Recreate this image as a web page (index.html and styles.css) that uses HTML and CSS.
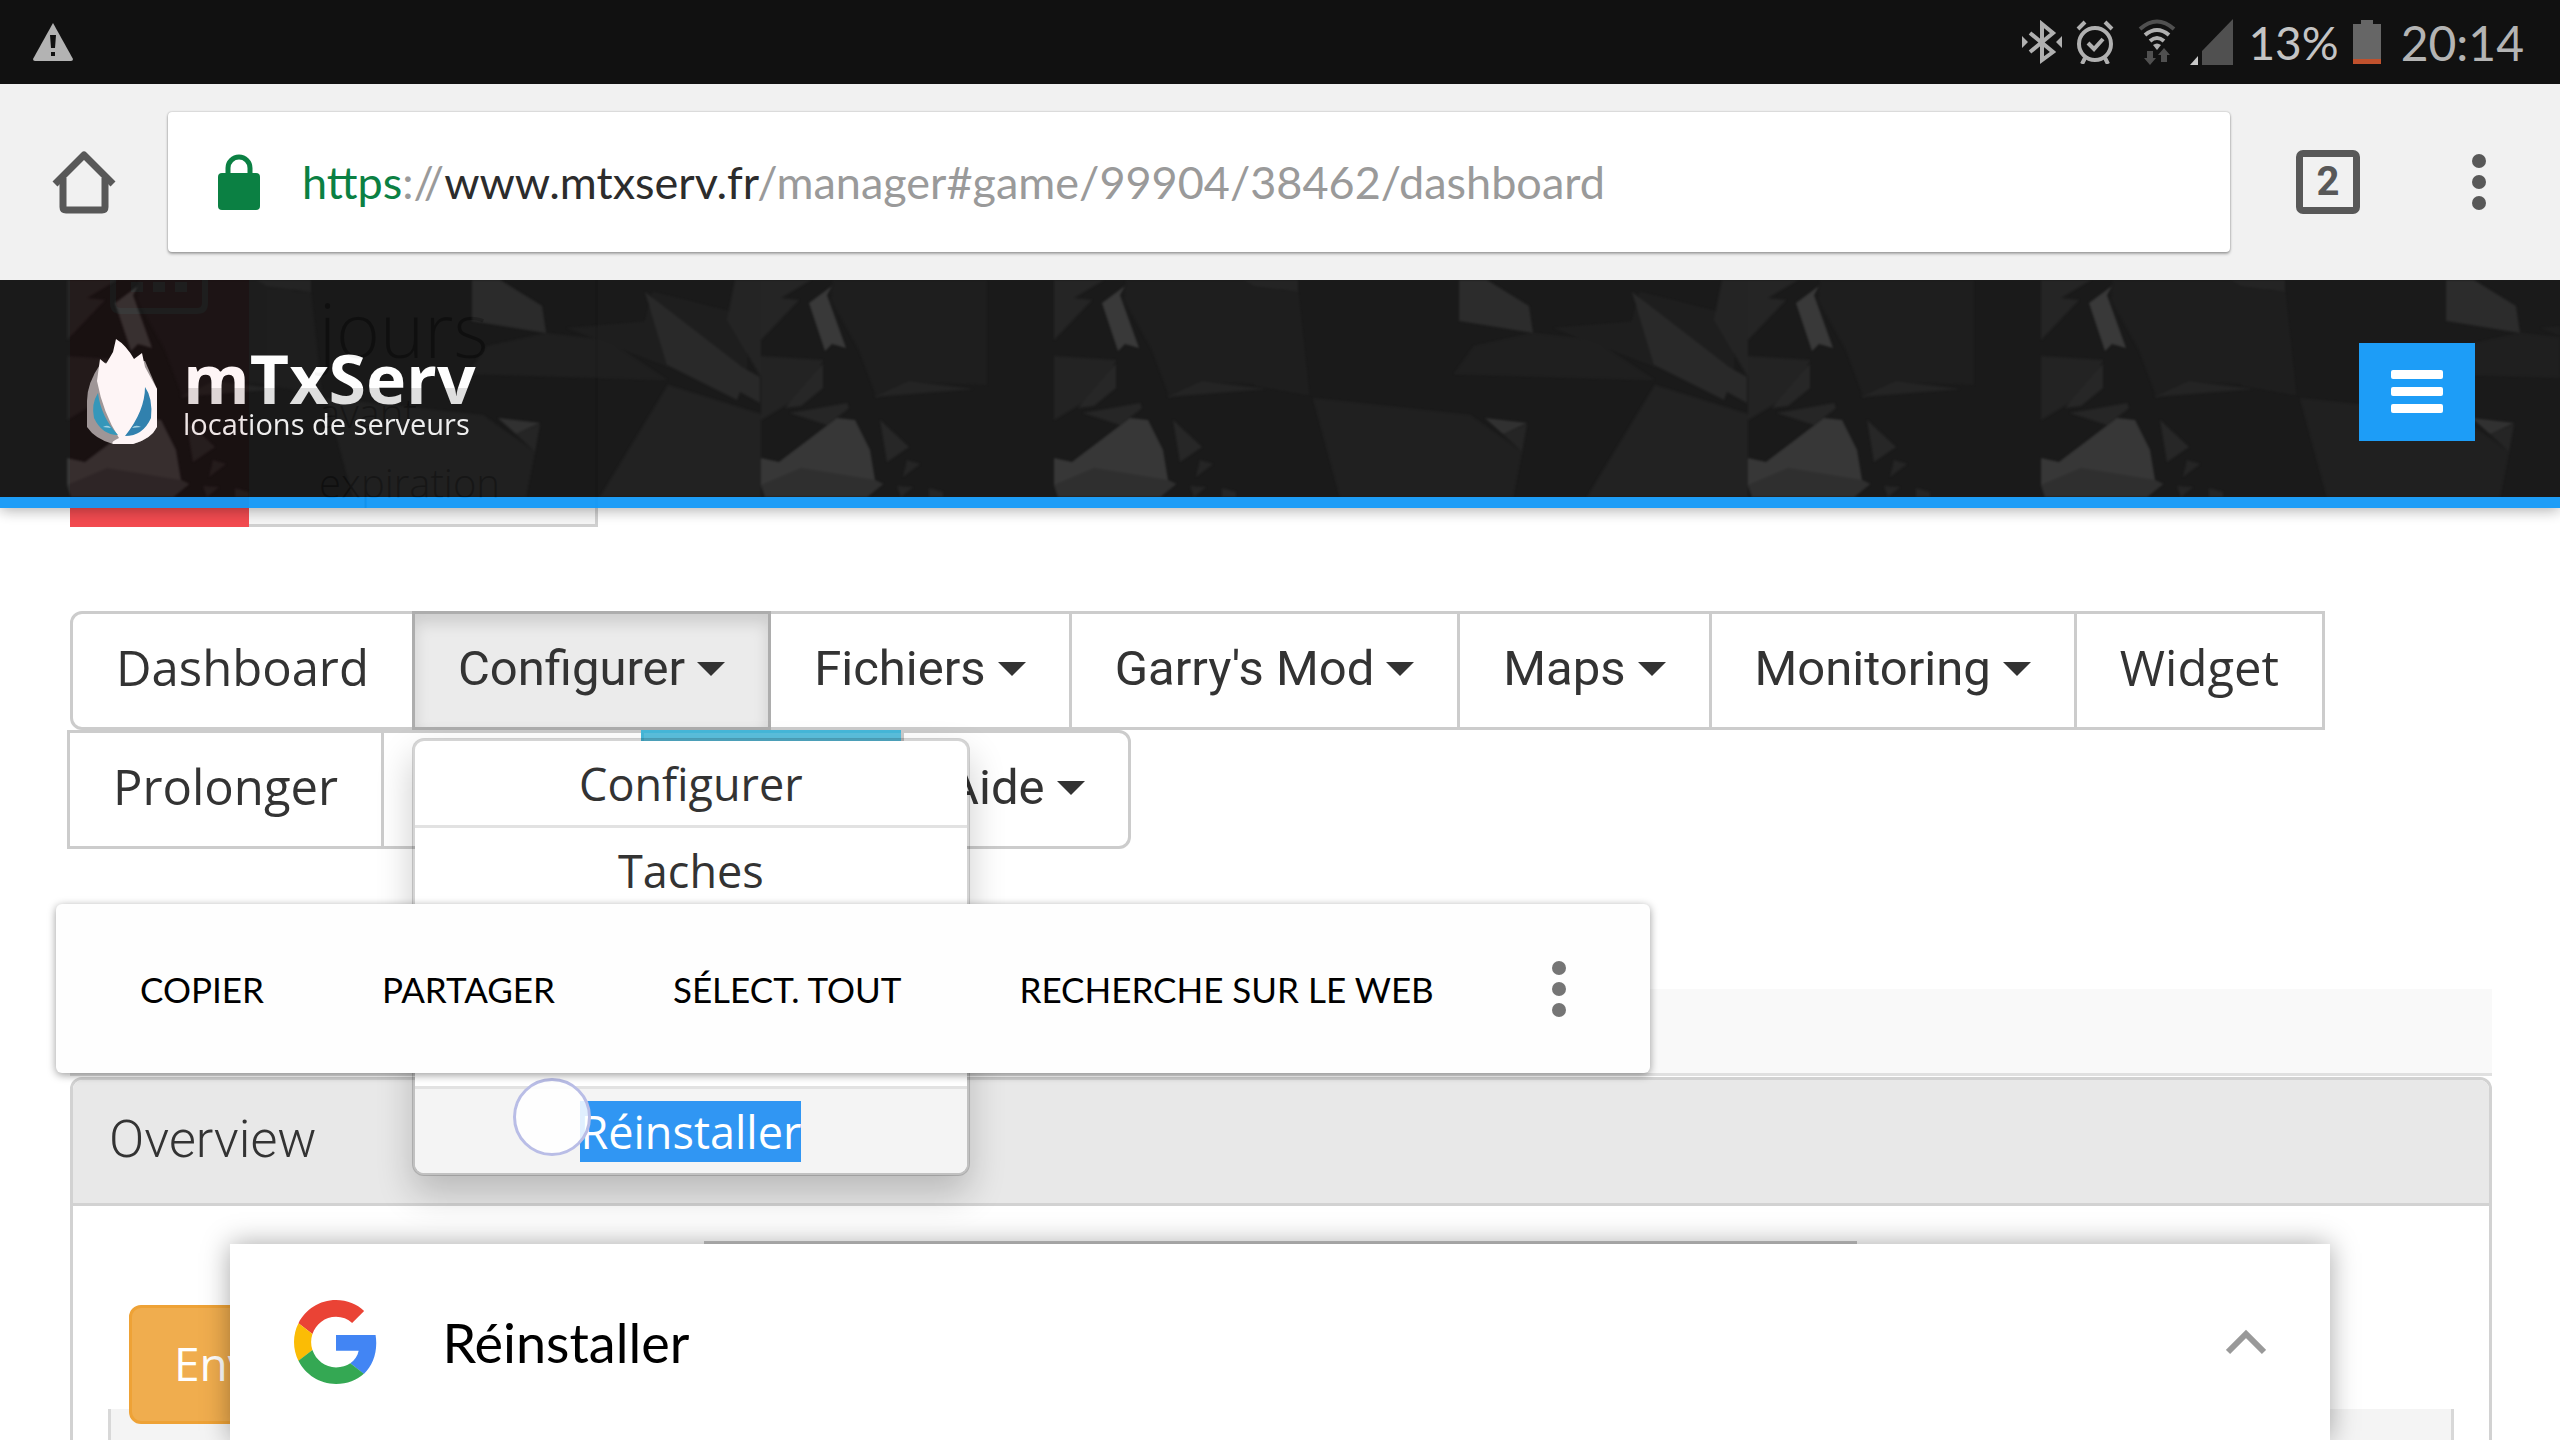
FILE: index.html
```html
<!DOCTYPE html>
<html lang="fr">
<head>
<meta charset="utf-8">
<title>mTxServ - Manager</title>
<link rel="stylesheet" href="styles.css">
</head>
<body>
<div class="statusbar">
  <svg class="warn" width="42" height="40" viewBox="0 0 42 40"><path d="M21 1 41 37q0 2-2 2H3q-2 0-2-2z" fill="#b3b3b3"/><path d="M18 13h6l-1 13h-4zM19 30h4v4h-4z" fill="#111"/></svg>
  <div class="status-right">
    <svg width="40" height="44" viewBox="0 0 40 44" fill="none" stroke="#b0b0b0" stroke-width="4"><path d="M8 13 31 32 20 40V4l11 9L8 32"/><path d="M0 16v12l6-6zM40 16v12l-6-6z" fill="#b0b0b0" stroke="none"/></svg>
    <svg width="38" height="44" viewBox="0 0 38 44" fill="none" stroke="#b0b0b0" stroke-width="4"><circle cx="19" cy="24" r="16"/><path d="m12 23 6 6 9-10M2 9l7-7M36 9l-7-7M9 38l-3 6M29 38l3 6"/></svg>
    <svg class="wifi" width="38" height="46" viewBox="0 0 38 46" fill="none" stroke-width="4"><path d="M2 10Q19-5 36 10" stroke="#505050"/><path d="M7 16q12-10 24 0M12 22q7-6 14 0" stroke="#b0b0b0"/><path d="m15 26q4-3 8 0l-4 5z" fill="#b0b0b0"/><path d="M9 32h6v7h3l-6 7-6-7h3zM23 43h6v-7h3l-6-7-6 7h3z" fill="#505050"/></svg>
    <svg class="signal" width="44" height="46" viewBox="0 0 44 46"><path d="M12 32 43 0v46H12z" fill="#505050"/><path d="M0 46h8v-9z" fill="#c8c8c8"/></svg>
    <span class="level">13%</span>
    <svg class="battery" width="28" height="44" viewBox="0 0 28 44"><path d="M8 0h12v4h8v35H0V4h8z" fill="#666"/><path d="M0 39h28v5H0z" fill="#c0512d"/></svg>
    <span>20:14</span>
  </div>
</div>

<div class="toolbar">
  <button class="icon-btn home" aria-label="Accueil"><svg width="64" height="64" viewBox="0 0 64 64" fill="none" stroke="#585858" stroke-width="7" stroke-linejoin="round"><path d="M3 34 32 5l29 29"/><path d="M11 28v29q0 3 3 3h36q3 0 3-3V28"/></svg></button>
  <div class="omnibox">
    <svg width="42" height="56" viewBox="0 0 42 56"><path d="M10 22V14a11 11 0 0 1 22 0v8" fill="none" stroke="#0b8043" stroke-width="5"/><rect y="19" width="42" height="37" rx="4" fill="#0b8043"/></svg>
    <div class="url" role="textbox" aria-label="Adresse" contenteditable="true" spellcheck="false"><span class="secure">https</span>://<span class="host">www.mtxserv.fr</span>/manager#game/99904/38462/dashboard</div>
  </div>
  <button class="icon-btn tabs" aria-label="Onglets">2</button>
  <button class="icon-btn" aria-label="Menu"><svg width="14" height="58" viewBox="0 0 14 58" fill="#585858"><circle cx="7" cy="8" r="7"/><circle cx="7" cy="29" r="7"/><circle cx="7" cy="50" r="7"/></svg></button>
</div>

<main class="viewport">
  <header class="site-header">
    <svg class="facets" width="100%" height="100%" aria-hidden="true">
      <defs>
        <g id="facet-main">
          <path d="M0 0H50L20 18 38 20 0 60z" fill="#1a1a1a"/>
          <path d="M0 76 62 80 50 110 0 140z" fill="#181818"/>
          <path d="M24 128 62 84V108L40 126z" fill="#1c1c1c"/>
          <path d="M72 0H226V105L148 102 116 118 98 70 70 20z" fill="#121212"/>
          <path d="M48 23 71 6 66 15 85 68 71 64 64 71z" fill="#2f2f2f"/>
          <path d="M29 133 86 123 88 128 82 133 66 145z" fill="#1b1b1b"/>
          <path d="M0 178 18 182 76 138 94 140 109 170 114 200 122 204 106 217H4L0 205z" fill="#2d2d2d"/>
          <path d="M0 205 40 188 114 200 122 204 106 217H4z" fill="#242424"/>
          <path d="M119 140 148 167 126 182z" fill="#1c1c1c"/>
          <path d="M146 180 159 184 142 197zM136 206 152 207 140 217zM168 208 182 212V217H168z" fill="#1a1a1a"/>
          <path d="M113 117 148 101 212 109z" fill="#191919"/>
        </g>
        <pattern id="facets" x="67" width="987" height="217" patternUnits="userSpaceOnUse">
          <g>
            <use href="#facet-main"/>
            <path d="M190 0H244V12L200 6z" fill="#191919"/>
            <path d="M244 12 255 115 200 105V10z" fill="#131313"/>
            <path d="M405 0H433L475 26 479 53 405 41z" fill="#212121"/>
            <path d="M420 66 479 53 540 60 600 100 400 94z" fill="#141414"/>
            <path d="M259 118 416 135 468 172 459 217H286z" fill="#151515"/>
            <path d="M431 138 473 143 449 154z" fill="#272727"/>
            <path d="M449 154 473 144 468 172z" fill="#1a1a1a"/>
            <path d="M500 48 578 42 586 12 680 36V100L600 86z" fill="#131313"/>
            <path d="M668 0H694V97L660 40z" fill="#191919"/>
            <path d="M578 12 675 87 693 97V123L673 112 670 120 600 85z" fill="#1e1e1e"/>
            <path d="M601 105 694 134V217H533z" fill="#171717"/>
          </g>
          <svg x="694" width="226" height="217"><use href="#facet-main"/></svg>
        </pattern>
      </defs>
      <rect width="100%" height="100%" fill="#0e0e0e"/>
      <rect class="facet-fill" width="100%" height="100%" fill="url(#facets)"/>
    </svg>
    <a class="brand" href="#">
      <svg width="74" height="106" viewBox="0 0 74 106"><path d="M16 24Q2 44 2 62v26q8 12 26 17h20q20-6 24-18V50L60 22z" fill="#9b9b9b"/><path d="M31 0q10 6 18 20l8-6 3 14 12 22v38q-6 12-24 17H28q-3-2 6-6Q18 74 12 42l3-22 6 5 7-12z" fill="#fff"/><path d="M13 54q3 24 20 42-16 0-24-17-3-14 4-25z" fill="#2b9cc0"/><path d="M60 48q0 24-20 49 18 0 26-18 2-20-6-31z" fill="#2784b4"/><path d="M18 88q5-3 8 1zM47 89q3-4 9-1z" fill="#9fd8ea"/></svg>
      <span class="brand-text"><strong>mTxServ</strong><small>locations de serveurs</small></span>
    </a>
    <button class="burger" aria-label="Navigation"><i></i><i></i><i></i></button>
  </header>

  <div class="page">
    <section class="stat">
      <div class="stat-icon"><svg width="98" height="34" viewBox="0 0 98 34" fill="none" stroke="#fff" stroke-width="6"><path d="M3 0v23q0 8 8 8h76q8 0 8-8V0"/><path d="M21 7h12M43 7h12M65 7h12" stroke-width="10"/></svg></div>
      <div class="stat-body"><b>jours</b><span>avant</span><span>expiration</span></div>
    </section>

    <ul class="nav">
      <li><a class="btn" href="#">Dashboard</a></li>
      <li class="open"><button class="btn drop active">Configurer</button>
        <ul class="menu">
          <li><a href="#">Configurer</a></li>
          <li><a href="#">Taches</a></li>
          <li><a href="#"></a></li>
          <li><a href="#">Options</a></li>
          <li class="hover"><a href="#"><mark>Réinstaller</mark></a></li>
        </ul>
      </li>
      <li><button class="btn drop">Fichiers</button></li>
      <li><button class="btn drop">Garry's Mod</button></li>
      <li><button class="btn drop">Maps</button></li>
      <li><button class="btn drop">Monitoring</button></li>
      <li><a class="btn" href="#">Widget</a></li>
      <li><a class="btn" href="#">Prolonger</a></li>
      <li class="wide"><a class="btn" href="#"></a></li>
      <li class="wide"><a class="btn info" href="#"></a></li>
      <li><button class="btn drop">Aide</button></li>
    </ul>

    <div class="strip"></div>

    <section class="panel">
      <h2>Overview</h2>
      <div class="panel-body">
        <div class="frame"></div>
        <button class="send">Envoyer</button>
        <div class="console"></div>
      </div>
    </section>
  </div>

  <span class="touch"></span>

  <div class="actions" role="toolbar">
    <button>COPIER</button>
    <button>PARTAGER</button>
    <button>SÉLECT. TOUT</button>
    <button>RECHERCHE SUR LE WEB</button>
    <button class="more" aria-label="Plus"><svg width="14" height="58" viewBox="0 0 14 58" fill="#757575"><circle cx="7" cy="8" r="7"/><circle cx="7" cy="29" r="7"/><circle cx="7" cy="50" r="7"/></svg></button>
  </div>

  <div class="search-sheet">
    <svg width="84" height="86" viewBox="2 2 44 44"><path fill="#EA4335" d="M24 9.5c3.54 0 6.71 1.22 9.21 3.6l6.85-6.85C35.9 2.38 30.47 0 24 0 14.62 0 6.51 5.38 2.56 13.22l7.98 6.19C12.43 13.72 17.74 9.5 24 9.5z" transform="translate(2 2) scale(.917)"/><path fill="#4285F4" d="M46.98 24.55c0-1.57-.15-3.09-.38-4.55H24v9.02h12.94c-.58 2.96-2.26 5.48-4.78 7.18l7.73 6c4.51-4.18 7.09-10.36 7.09-17.65z" transform="translate(2 2) scale(.917)"/><path fill="#FBBC05" d="M10.53 28.59A14.5 14.5 0 0 1 9.77 24c0-1.6.27-3.14.76-4.59l-7.98-6.19A23.9 23.9 0 0 0 0 24c0 3.88.92 7.54 2.56 10.78z" transform="translate(2 2) scale(.917)"/><path fill="#34A853" d="M24 48c6.48 0 11.93-2.13 15.89-5.81l-7.73-6c-2.15 1.45-4.92 2.3-8.16 2.3-6.26 0-11.57-4.22-13.47-9.91l-7.98 6.19C6.51 42.62 14.62 48 24 48z" transform="translate(2 2) scale(.917)"/></svg>
    <span>Réinstaller</span>
    <button aria-label="Ouvrir"><svg width="40" height="26" viewBox="0 0 40 26" fill="none" stroke="#999" stroke-width="6"><path d="M2 23 20 5l18 18"/></svg></button>
  </div>
</main>
</body>
</html>
```
FILE: styles.css
```css
* { box-sizing: border-box; }
body {
  margin: 0;
  height: 100vh;
  overflow: hidden;
  display: flex;
  flex-direction: column;
  background: #fff;
  color: #333;
  font-family: "Open Sans", "Noto Sans", sans-serif;
}
svg { display: block; flex: none; }
button { margin: 0; padding: 0; border: 0; background: none; color: inherit; font: inherit; }
a { color: inherit; text-decoration: none; }
ul { margin: 0; padding: 0; list-style: none; }

/* Android status bar */
.statusbar {
  flex: none;
  height: 84px;
  padding: 0 36px 0 32px;
  display: flex;
  align-items: center;
  justify-content: space-between;
  background: #111;
  color: #b4b4b4;
  font: 48px Lato, sans-serif;
}
.status-right { display: flex; align-items: center; gap: 14px; }
.wifi { margin-left: 10px; }
.level { color: #c4c4c4; font-size: 46px; }
.battery { margin-right: 6px; }

/* Browser toolbar */
.toolbar {
  flex: none;
  height: 196px;
  padding: 0 74px 0 52px;
  display: flex;
  align-items: center;
  background: #f1f1f1;
}
.icon-btn { flex: none; color: #585858; }
.omnibox {
  flex: 1;
  height: 140px;
  margin: 0 66px 0 52px;
  padding: 0 50px;
  display: flex;
  align-items: center;
  gap: 42px;
  background: #fff;
  border-radius: 4px;
  box-shadow: 0 0 2px rgba(0, 0, 0, .3), 0 2px 3px rgba(0, 0, 0, .3);
}
.url { outline: none; color: #9a9a9a; font: 45px/60px Lato, sans-serif; white-space: nowrap; }
.secure { color: #0b8043; }
.host { color: #2c2c2c; }
.tabs {
  width: 64px;
  height: 64px;
  margin-right: 112px;
  border: 7px solid #585858;
  border-radius: 7px;
  font: bold 40px/50px Roboto, sans-serif;
  text-align: center;
}

/* Web page */
.viewport { flex: 1; position: relative; overflow: hidden; }
.site-header {
  position: absolute;
  z-index: 2;
  top: 0;
  left: 0;
  right: 0;
  height: 228px;
  padding: 6px 85px 0;
  display: flex;
  align-items: center;
  justify-content: space-between;
  border-bottom: 11px solid #1198f7;
  box-shadow: 0 2px 14px rgba(0, 0, 0, .35);
  opacity: .95;
}
.facets { position: absolute; inset: 0; }
.facet-fill { filter: blur(1px); }
.brand { position: relative; display: flex; align-items: center; gap: 24px; color: #fff; }
.brand-text { display: flex; flex-direction: column; }
.brand strong {
  font-size: 68px;
  line-height: 64px;
  background: linear-gradient(#fff 66%, #dedede 66%);
  background-clip: text;
  color: transparent;
}
.brand small { font-size: 29px; line-height: 28px; color: #eee; }
.burger {
  position: relative;
  width: 116px;
  height: 98px;
  display: flex;
  flex-direction: column;
  align-items: center;
  justify-content: center;
  gap: 8px;
  background: #1198f7;
}
.burger i { width: 52px; height: 9px; border-radius: 2px; background: #fff; }

.page { padding: 0 68px 0 70px; }
.stat { width: 528px; height: 247px; display: flex; }
.stat-icon { width: 179px; padding-left: 40px; background: #f24b50; }
.stat-body {
  flex: 1;
  padding-left: 70px;
  display: flex;
  flex-direction: column;
  border: solid #d0d0d0;
  border-width: 0 3px 3px 0;
  background: #f5f5f5;
  font-size: 40px;
  line-height: 70px;
  font-weight: 300;
}
.stat-body b { font-size: 75px; line-height: 98px; font-weight: 300; }

.nav { margin-top: 84px; display: flex; flex-wrap: wrap; }
.nav > li { margin-left: -3px; position: relative; }
.nav > li:first-child { margin-left: 0; }
.btn {
  display: flex;
  align-items: center;
  height: 119px;
  padding: 0 43px 8px;
  border: 3px solid #ccc;
  background: #fff;
  font-size: 49px;
  line-height: 64px;
  white-space: nowrap;
}
.drop { padding-bottom: 4px; font-family: Roboto, sans-serif; gap: 12px; }
.drop::after {
  content: "";
  border: solid transparent;
  border-width: 14px 14px 0;
  border-top-color: #333;
}
.nav > li:first-child .btn { border-radius: 12px 0 0 12px; }
.nav > li:last-child .btn { border-radius: 0 12px 12px 0; }
.nav > li.open { z-index: 1; }
.btn.active { background: #ebebeb; border-color: #adadad; box-shadow: inset 0 9px 15px rgba(0, 0, 0, .13); }
.btn.info { background: #5bc0de; border-color: #46b8da; }
.wide { width: 263px; }

.menu {
  position: absolute;
  top: 127px;
  left: 0;
  width: 558px;
  border: 3px solid rgba(0, 0, 0, .17);
  border-radius: 12px;
  background: #fff;
  background-clip: padding-box;
  box-shadow: 0 18px 36px rgba(0, 0, 0, .2);
  font-size: 45px;
  line-height: 63px;
  text-align: center;
}
.menu a { display: block; height: 84px; padding-top: 11px; }
.menu li + li { border-top: 3px solid #e2e2e2; }
.menu .hover { background: #f4f4f4; border-radius: 0 0 9px 9px; }
.menu mark { background: #3096f3; color: #fff; }

.strip { height: 87px; margin-top: 140px; background: #f9f9f9; border-bottom: 3px solid #e0e0e0; }
.panel { margin-top: 1px; border: 3px solid #d2d2d2; border-radius: 12px; overflow: hidden; }
.panel h2 {
  margin: 0;
  height: 126px;
  padding: 28px 36px;
  border-bottom: 3px solid #d2d2d2;
  background: #e8e8e8;
  font: 300 52px/64px Roboto, sans-serif;
}
.panel-body { position: relative; padding: 35px 35px 0; }
.frame { height: 64px; margin: 0 597px 0 596px; border-top: 3px solid #c4c4c4; }
.send {
  position: relative;
  display: block;
  height: 119px;
  margin-left: 21px;
  padding: 0 42px 4px;
  border: 3px solid #eea236;
  border-radius: 12px;
  background: #f0ad4e;
  color: #fff;
  font-size: 46px;
}
.console { height: 200px; margin-top: -15px; background: #f4f4f4; border: solid #d8d8d8; border-width: 0 3px; }

/* Native overlays drawn above the page */
.touch {
  position: absolute;
  top: 798px;
  left: 513px;
  width: 78px;
  height: 78px;
  border: 3px solid #b9bde6;
  border-radius: 50%;
  background: rgba(255, 255, 255, .85);
  z-index: 3;
}
.actions {
  position: absolute;
  z-index: 4;
  top: 624px;
  left: 56px;
  height: 169px;
  padding: 0 84px;
  display: flex;
  align-items: center;
  gap: 118px;
  border-radius: 6px;
  background: #fefefe;
  box-shadow: 0 2px 8px rgba(0, 0, 0, .4);
  color: #000;
  font: 35px Lato, sans-serif;
  white-space: nowrap;
}
.search-sheet {
  position: absolute;
  z-index: 3;
  left: 9%;
  right: 9%;
  bottom: 0;
  height: 196px;
  padding: 0 64px;
  display: flex;
  align-items: center;
  background: #fff;
  box-shadow: 0 0 26px rgba(0, 0, 0, .35);
  color: #000;
  font: 54px Lato, sans-serif;
}
.search-sheet span { flex: 1; padding-left: 64px; }
```
